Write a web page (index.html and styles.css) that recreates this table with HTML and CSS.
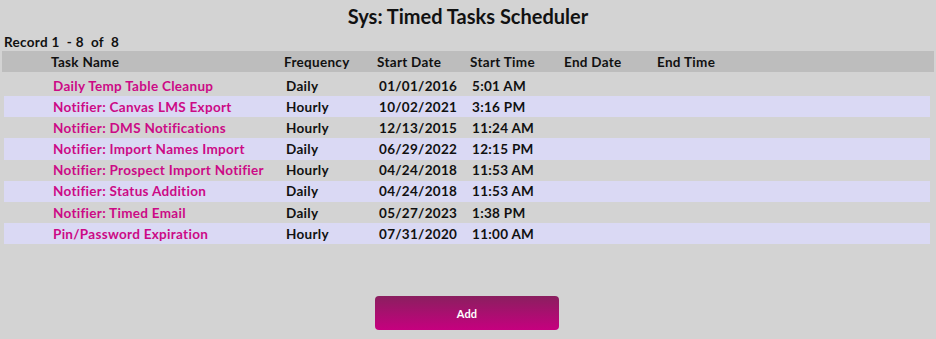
FILE: index.html
```html
<!DOCTYPE html>
<html lang="en">
<head>
    <meta charset="UTF-8">
    <meta name="viewport" content="width=device-width, initial-scale=1.0">
    <title>Sys: Timed Tasks Scheduler</title>
    <link rel="stylesheet" href="styles.css">
</head>
<body>
    <div class="page">
        <h1 class="title">Sys: Timed Tasks Scheduler</h1>

        <div class="record-count">Record 1&nbsp; - 8&nbsp; of&nbsp; 8</div>

        <div class="grid-head">
            <span></span>
            <span>Task Name</span>
            <span>Frequency</span>
            <span>Start Date</span>
            <span>Start Time</span>
            <span>End Date</span>
            <span>End Time</span>
            <span></span>
        </div>

        <div class="grid-body">
            <div class="task-row">
                <span></span>
                <a class="task-link" href="#">Daily Temp Table Cleanup</a>
                <span>Daily</span>
                <span>01/01/2016</span>
                <span>5:01 AM</span>
                <span></span><span></span><span></span>
            </div>
            <div class="task-row alt">
                <span></span>
                <a class="task-link" href="#">Notifier: Canvas LMS Export</a>
                <span>Hourly</span>
                <span>10/02/2021</span>
                <span>3:16 PM</span>
                <span></span><span></span><span></span>
            </div>
            <div class="task-row">
                <span></span>
                <a class="task-link" href="#">Notifier: DMS Notifications</a>
                <span>Hourly</span>
                <span>12/13/2015</span>
                <span>11:24 AM</span>
                <span></span><span></span><span></span>
            </div>
            <div class="task-row alt">
                <span></span>
                <a class="task-link" href="#">Notifier: Import Names Import</a>
                <span>Daily</span>
                <span>06/29/2022</span>
                <span>12:15 PM</span>
                <span></span><span></span><span></span>
            </div>
            <div class="task-row">
                <span></span>
                <a class="task-link" href="#">Notifier: Prospect Import Notifier</a>
                <span>Hourly</span>
                <span>04/24/2018</span>
                <span>11:53 AM</span>
                <span></span><span></span><span></span>
            </div>
            <div class="task-row alt">
                <span></span>
                <a class="task-link" href="#">Notifier: Status Addition</a>
                <span>Daily</span>
                <span>04/24/2018</span>
                <span>11:53 AM</span>
                <span></span><span></span><span></span>
            </div>
            <div class="task-row">
                <span></span>
                <a class="task-link" href="#">Notifier: Timed Email</a>
                <span>Daily</span>
                <span>05/27/2023</span>
                <span>1:38 PM</span>
                <span></span><span></span><span></span>
            </div>
            <div class="task-row alt">
                <span></span>
                <a class="task-link" href="#">Pin/Password Expiration</a>
                <span>Hourly</span>
                <span>07/31/2020</span>
                <span>11:00 AM</span>
                <span></span><span></span><span></span>
            </div>
        </div>

        <div class="actions">
            <button class="btn-add">Add</button>
        </div>
    </div>
</body>
</html>
```

FILE: styles.css
```css
* {
    margin: 0;
    padding: 0;
    box-sizing: border-box;
}

body {
    font-family: Lato, "DejaVu Sans", sans-serif;
    font-weight: 700;
    background: #d3d3d3;
    color: #111;
    font-size: 13.5px;
    letter-spacing: 0.3px;
}

.page {
    padding-top: 4px;
}

.title {
    text-align: center;
    font-size: 20px;
    font-weight: 700;
    letter-spacing: 0;
    line-height: 24px;
    height: 30px;
}

.record-count {
    padding-left: 4px;
    line-height: 16px;
    height: 17px;
}

/* shared column layout for the header and the rows */
.grid-head,
.task-row {
    display: grid;
    grid-template-columns: 49px 233px 93px 93px 94px 93px 93px 1fr;
    align-items: center;
}

.grid-head {
    margin: 0 2px;
    height: 21px;
    background: #bdbdbd;
}

.grid-body {
    margin: 3px 6px 0 4px;
}

.task-row {
    height: 21.17px;
}

.task-row > span:nth-child(3) {
    padding-left: 0;
}

.task-row.alt {
    background: #dad9f4;
}

.task-link {
    color: #cc0a86;
    text-decoration: none;
}

.actions {
    display: flex;
    justify-content: center;
    padding-top: 52px;
    padding-right: 2px;
}

.btn-add {
    width: 184px;
    height: 34px;
    border: none;
    border-radius: 4px;
    background: linear-gradient(to bottom, #8a1f5f 0%, #c6007f 100%);
    color: #fff;
    font-family: inherit;
    font-weight: 700;
    font-size: 11px;
    letter-spacing: 0.2px;
    cursor: pointer;
}
```
